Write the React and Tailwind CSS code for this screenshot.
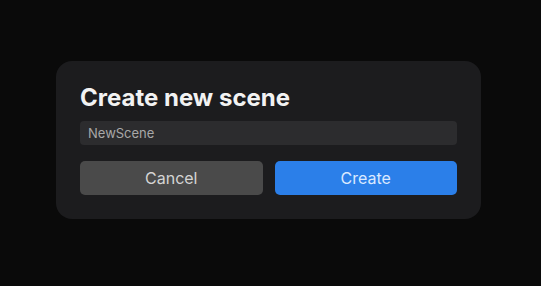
export default function App() {
  return (
    <div className="flex h-[286px] w-[541px] items-start bg-[#0a0a0a] pl-[56px] pt-[61px] font-['Inter',sans-serif]">
      <div className="flex w-[425px] flex-col rounded-2xl bg-[#1c1c1e] px-6 pb-6 pt-[21px]">
        <h1 className="text-2xl leading-8 font-bold text-[#f2f2f2]">Create new scene</h1>
        <input
          defaultValue="NewScene"
          className="mt-[7px] h-6 w-full rounded-[4px] bg-[#2c2c2e] px-2 text-[13px] text-[#a8a8a8] outline-none"
        />
        <div className="mt-4 flex gap-3">
          <button className="h-[34px] flex-1 rounded-[5px] bg-[#4a4a4a] text-base text-[#d4d4d4]">Cancel</button>
          <button className="h-[34px] flex-1 rounded-[5px] bg-[#2b7fe9] text-base text-[#dbe9ff]">Create</button>
        </div>
      </div>
    </div>
  );
}
